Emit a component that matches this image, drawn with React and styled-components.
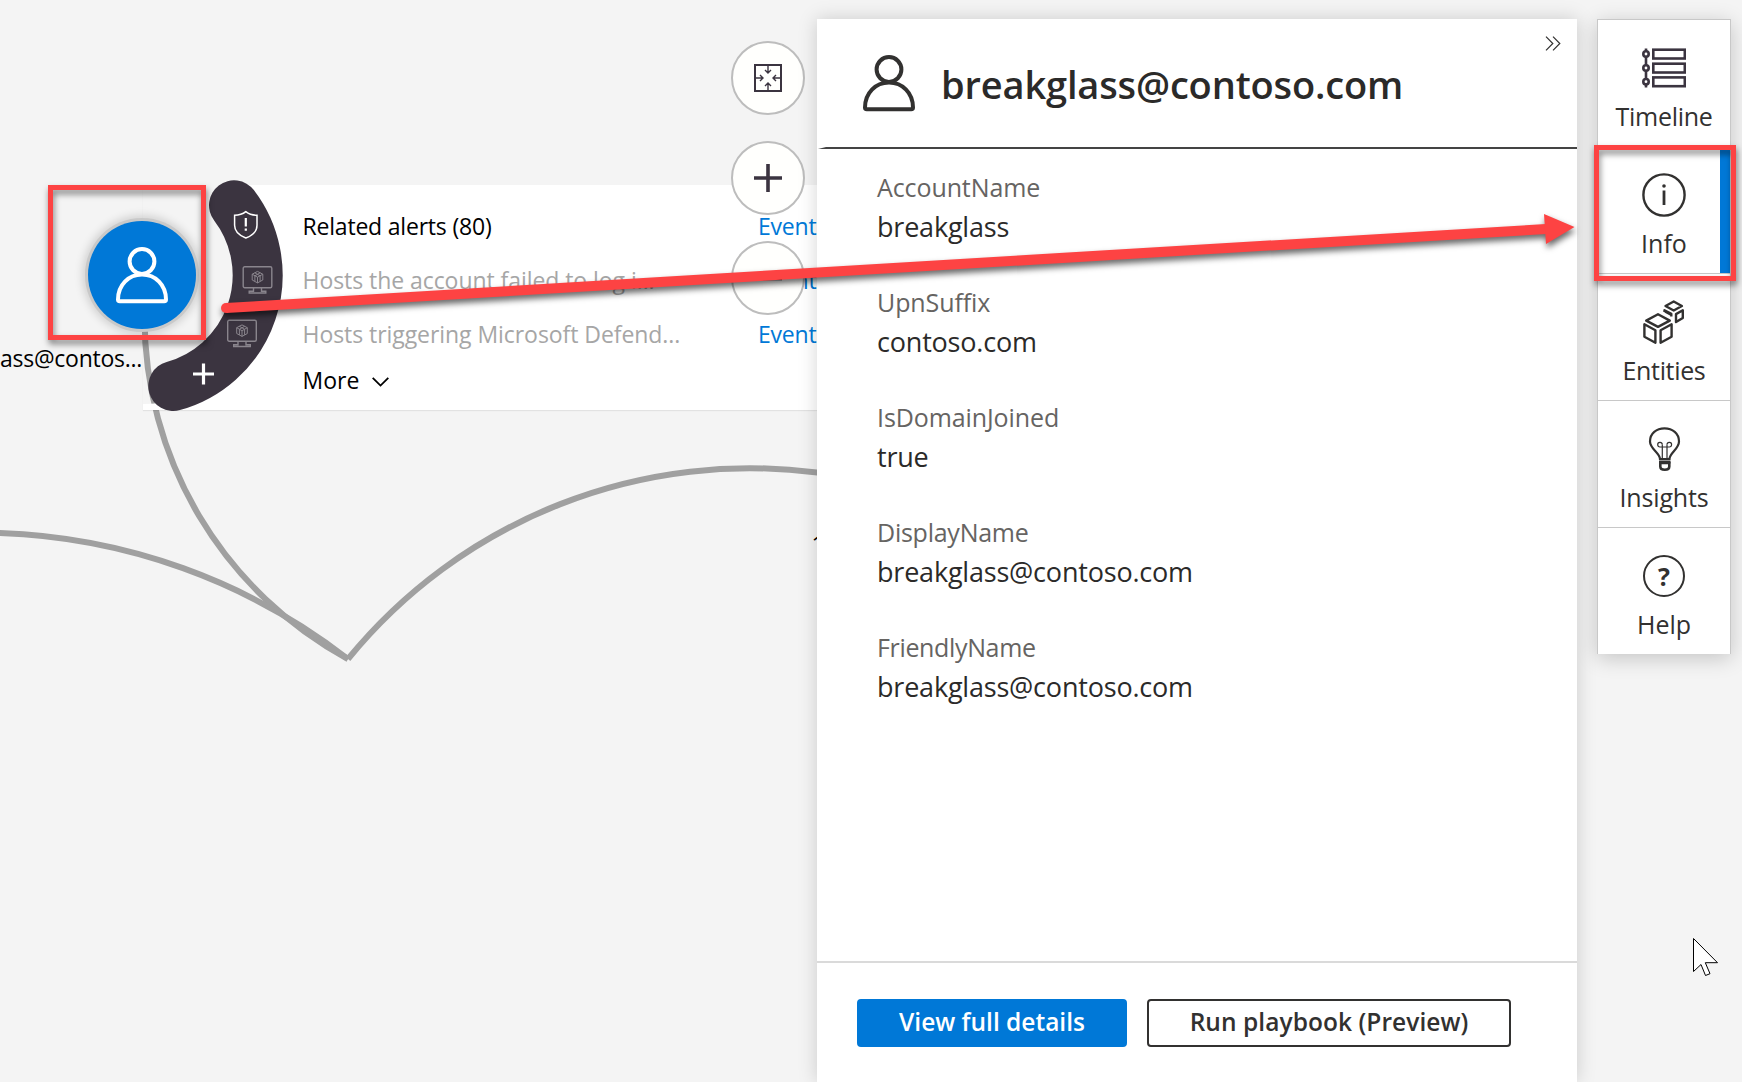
import React from "react";
import styled, { createGlobalStyle } from "styled-components";

const Global = createGlobalStyle`
  * { box-sizing: border-box; }
  html, body { margin: 0; height: 100%; }
  body {
    background: #f4f4f4;
    font-family: "Open Sans", "Noto Sans", sans-serif;
    color: #2b2a29;
    overflow: hidden;
  }
  svg { display: block; }
`;

const red = "#fd4343";
const ink = "#323130";
const plum = "#3b3440";

const Screen = styled.div`
  position: relative;
  display: flex;
  width: 1742px;
  height: 1082px;
  overflow: hidden;
  background: #f4f4f4;
`;

const Canvas = styled.main`
  position: relative;
  flex: 0 0 817px;
  height: 100%;
`;

const Edges = styled.svg`
  position: absolute;
  inset: 0;
  fill: none;
  stroke: #a0a0a0;
  stroke-width: 6;
`;

const NodeLabel = styled.div`
  position: absolute;
  left: 0;
  top: 342px;
  font-size: 23px;
  line-height: 32px;
  letter-spacing: -0.25px;
  white-space: nowrap;
  color: #000;
`;

const CountLabel = styled(NodeLabel)`
  left: 811.5px;
  top: 528px;
`;

const RelatedCard = styled.section`
  position: absolute;
  left: 143px;
  top: 185px;
  width: 674px;
  height: 225px;
  padding: 24px 0 0 159.5px;
  background: radial-gradient(circle at 0 90px, transparent 128.5px, #fff 129.5px);
  box-shadow: 0 1px 1px rgba(0, 0, 0, 0.07);
`;

const RelatedRow = styled.div`
  display: grid;
  grid-template-columns: 455.5px 1fr;
  height: 54px;
  font-size: 23px;
  line-height: 34px;
  letter-spacing: ${(p) => (p.$dim ? "-0.06px" : "-0.2px")};
  white-space: nowrap;
  overflow: hidden;
  color: ${(p) => (p.$dim ? "#a6a6a6" : "#000")};
`;

const EventLink = styled.a`
  color: #0078d7;
  letter-spacing: -0.2px;
`;

const MoreRow = styled.div`
  display: flex;
  align-items: center;
  gap: 13px;
  margin-top: -8px;
  font-size: 23px;
  line-height: 34px;
  color: #000;
  svg { margin-top: 4px; }
`;

const AccountNode = styled.div`
  position: absolute;
  left: 88px;
  top: 221px;
  width: 108px;
  height: 108px;
  border-radius: 50%;
  background: #0078d7;
  box-shadow: 0 0 0 3px #c9c9c9, 0 0 10px 5px rgba(0, 0, 0, 0.16);
  display: grid;
  place-items: center;
  color: #fff;
`;

const RadialMenu = styled.svg`
  position: absolute;
  left: 140px;
  top: 172px;
`;

const ZoomTools = styled.div`
  position: absolute;
  left: 731px;
  top: 41px;
  display: flex;
  flex-direction: column;
  gap: 26px;
`;

const ZoomButton = styled.div`
  width: 74px;
  height: 74px;
  border: 2px solid #bdbdbd;
  border-radius: 50%;
  background: #fffffd;
  display: grid;
  place-items: center;
`;

const Panel = styled.aside`
  position: relative;
  flex: 0 0 760px;
  margin-top: 19px;
  height: 1063px;
  display: flex;
  flex-direction: column;
  background: #fff;
  box-shadow: 0 0 18px rgba(0, 0, 0, 0.17);
`;

const PanelHeader = styled.header`
  display: flex;
  height: 128px;
  padding-left: 46px;
`;

const HeaderRule = styled.div`
  height: 2px;
  background: #444;
  clip-path: polygon(1px 100%, 9px 0, 100% 0, 100% 100%);
`;

const HeaderIcon = styled.div`
  margin-top: 36px;
  width: 52px;
  color: ${ink};
`;

const Title = styled.h1`
  flex: 1;
  margin: 35px 0 0 26px;
  font-size: 38px;
  font-weight: 600;
  line-height: 60px;
  letter-spacing: -0.15px;
  white-space: nowrap;
  color: #2b2a29;
`;

const Collapse = styled.div`
  margin: 16.5px 16px 0 0;
`;

const Fields = styled.dl`
  flex: 1;
  margin: 0;
  padding: 19px 0 0 60px;
`;

const Field = styled.div`
  height: 115px;
`;

const FieldName = styled.dt`
  font-size: 25px;
  line-height: 38px;
  letter-spacing: ${(p) => p.$spacing}px;
  color: #666462;
`;

const FieldValue = styled.dd`
  margin: 2px 0 0;
  font-size: 27px;
  line-height: 38px;
  letter-spacing: -0.2px;
  color: #2b2a29;
`;

const Footer = styled.footer`
  display: flex;
  gap: 20px;
  height: 121px;
  padding: 36px 0 0 40px;
  border-top: 2px solid #dadada;
`;

const Button = styled.button`
  width: ${(p) => p.$width}px;
  height: 48px;
  padding: 0 0 2px;
  border: 2px solid ${(p) => (p.$primary ? "#0078d7" : ink)};
  border-radius: 4px;
  background: ${(p) => (p.$primary ? "#0078d7" : "#fff")};
  color: ${(p) => (p.$primary ? "#fff" : ink)};
  font: 600 24.5px/40px "Open Sans", "Noto Sans", sans-serif;
  letter-spacing: ${(p) => p.$spacing}px;
  white-space: nowrap;
`;

const Rail = styled.nav`
  display: flex;
  flex-direction: column;
  margin: 19px 0 0 20px;
  width: 134px;
  height: 635px;
  border: 1px solid #c8c8c8;
  border-bottom: 0;
  background: #fff;
  box-shadow: 0 4px 20px rgba(0, 0, 0, 0.2);
`;

const RailItem = styled.div`
  display: flex;
  flex-direction: column;
  align-items: center;
  flex: 0 0 127px;
  padding-top: 26px;
  border-bottom: 1px solid #c8c8c8;
  box-shadow: ${(p) => (p.$active ? "inset -10px 0 0 #0078d7" : "none")};
  font-size: 25px;
  letter-spacing: ${(p) => p.$spacing}px;
  color: ${ink};
  &:last-child { border-bottom: 0; }
`;

const RailLabel = styled.span`
  margin-top: 8px;
  line-height: 36px;
`;

const Outline = styled.div`
  position: absolute;
  left: ${(p) => p.$x}px;
  top: ${(p) => p.$y}px;
  width: ${(p) => p.$w}px;
  height: ${(p) => p.$h}px;
  border: 5px solid ${red};
  filter: drop-shadow(1px 4px 3px rgba(0, 0, 0, 0.5));
`;

const Arrow = styled.svg`
  position: absolute;
  inset: 0;
  filter: drop-shadow(1px 4px 3px rgba(0, 0, 0, 0.6));
`;

const Cursor = styled.svg`
  position: absolute;
  left: 1690px;
  top: 935px;
`;

function UserIcon({ width = 52 }) {
  return (
    <svg width={width} height={57} viewBox="0 0 52 57" fill="none" stroke="currentColor" strokeWidth="4">
      <circle cx="26" cy="14.5" r="12.4" />
      <path d="M26 27.5C12.5 27.5 2 38 2 52.5q0 1.8 1.8 1.8h44.4q1.8 0 1.8-1.8C50 38 39.5 27.5 26 27.5Z" />
    </svg>
  );
}

function HostGlyph({ x, y }) {
  return (
    <g transform={`translate(${x} ${y})`} fill="none" stroke="#8a858d" strokeWidth="1.4">
      <rect x="0.7" y="0.7" width="28.6" height="21" rx="1.5" />
      <path d="M11 22v3.3H6.7V27h16.6v-1.7H19V22" />
      <path d="M15 5.4l5.3 2.8v5.8L15 16.9 9.7 14V8.2zM9.7 8.2l5.3 3 5.3-3M15 11.2v5.7M12.3 6.8l5.3 3v5.5M17.7 6.8l-5.3 3v5.5" strokeWidth="1" />
    </g>
  );
}

function TimelineIcon() {
  return (
    <svg width="44" height="44" viewBox="0 0 44 44" fill="none" stroke={plum} strokeWidth="2.6">
      <path d="M4 2.5v39" />
      {[8, 22, 35.7].map((y) => (
        <React.Fragment key={y}>
          <circle cx="4" cy={y} r="2.7" fill="#fff" strokeWidth="2.6" />
          <rect x="11.3" y={y - 4.3} width="31.5" height="8.8" />
        </React.Fragment>
      ))}
    </svg>
  );
}

function InfoIcon() {
  return (
    <svg width="44" height="44" viewBox="0 0 44 44" fill="none" stroke={ink} strokeWidth="2.4">
      <circle cx="22" cy="22" r="20.6" />
      <path d="M22 17.5V32" strokeWidth="2.8" />
      <circle cx="22" cy="13" r="1.8" fill={ink} stroke="none" />
    </svg>
  );
}

function EntitiesIcon() {
  return (
    <svg width="44" height="44" viewBox="0 0 44 44" fill="none" stroke={ink} strokeWidth="2.4" strokeLinejoin="round">
      <path d="M16 14.3 4.2 20.6 16 26.9l11.8-6.300z" />
      <path d="M2.400 24.2v12.5l11 6V30.200z" />
      <path d="M29.600 24.2v12.5l-11 6V30.200z" />
      <path d="M31.700 1.500 23.500 6l8.2 4.5L39.900 6z" />
      <path d="M40.800 10.300v7.600l-6.800 4.200v-8z" />
      <path d="M22.500 12V10.200l6.800 3.600v2.800M23 11.500l6 3.300" />
    </svg>
  );
}

function InsightsIcon() {
  return (
    <svg width="44" height="44" viewBox="0 0 44 44" fill="none" stroke={ink} strokeWidth="2.2">
      <path d="M18 32c0-6-10-10-10-17.5C8 6.5 14.5 1.3 22.5 1.3S37 6.5 37 14.5C37 22 27.5 26 27.5 32z" />
      <path d="M20.3 31V17.5M25 31V17.5" strokeWidth="1.2" />
      <path d="M20.3 20h-2.2a2.3 2.3 0 1 1 2.2-2.5M25 20h2.2a2.3 2.3 0 1 0-2.2-2.5M20.3 20H25" strokeWidth="1.2" />
      <path d="M18.3 36h9v3.5q0 3.2-4.5 3.2t-4.5-3.2z" strokeWidth="2.6" />
      <path d="M17 35h11.5" strokeWidth="3" />
    </svg>
  );
}

const HelpBadge = styled.div`
  width: 42px;
  height: 42px;
  margin: 1px 0;
  border: 2.4px solid ${ink};
  border-radius: 50%;
  font-size: 25px;
  font-weight: 700;
  line-height: 38px;
  text-align: center;
`;

const railItems = [
  { label: "Timeline", icon: <TimelineIcon />, spacing: -0.3 },
  { label: "Info", icon: <InfoIcon />, spacing: 0, active: true },
  { label: "Entities", icon: <EntitiesIcon />, spacing: -0.35 },
  { label: "Insights", icon: <InsightsIcon />, spacing: -0.15 },
  { label: "Help", icon: <HelpBadge>?</HelpBadge>, spacing: 0 },
];

const fields = [
  ["AccountName", "breakglass", -0.1],
  ["UpnSuffix", "contoso.com", -0.1],
  ["IsDomainJoined", "true", -0.1],
  ["DisplayName", "breakglass@contoso.com", -0.25],
  ["FriendlyName", "breakglass@contoso.com", -0.35],
];

const related = [
  { text: "Related alerts (80)" },
  { text: "Hosts the account failed to log i...", dim: true },
  { text: "Hosts triggering Microsoft Defend...", dim: true },
];

export default function App() {
  return (
    <Screen>
      <Global />
      <Canvas>
        <Edges width="817" height="1082">
          <path d="M144.5 317A389 389 0 0 0 348 659" />
          <path d="M-2 533A600 600 0 0 1 348 659" />
          <path d="M348 659A518.6 518.6 0 0 1 820 473" />
        </Edges>
        <NodeLabel>ass@contos...</NodeLabel>
        <CountLabel>1</CountLabel>
        <RelatedCard>
          {related.map((r) => (
            <RelatedRow key={r.text} $dim={r.dim}>
              <span>{r.text}</span>
              <EventLink>Event</EventLink>
            </RelatedRow>
          ))}
          <MoreRow>
            More
            <svg width="17" height="10" viewBox="0 0 17 10" fill="none" stroke="#000" strokeWidth="1.8">
              <path d="M.7.8 8.5 8.6 16.3.8" />
            </svg>
          </MoreRow>
        </RelatedCard>
        <AccountNode>
          <UserIcon />
        </AccountNode>
        <RadialMenu width="150" height="246" viewBox="140 172 150 246">
          <path d="M234 205.3A115 115 0 0 1 173.3 386" fill="none" stroke={plum} strokeWidth="50" strokeLinecap="round" />
          <g fill="none" stroke="#fff">
            <path d="M245.8 211.7q-4.5 3.6-11.2 3.6v10q0 8.5 11.2 12.7 11.2-4.2 11.2-12.7v-10q-6.7 0-11.2-3.6z" strokeWidth="1.5" />
            <path d="M245.8 218v8.5M245.8 228.5v2.3" strokeWidth="2.2" />
            <path d="M203.5 363.5v21M193 374h21" strokeWidth="3.2" />
          </g>
          <HostGlyph x={242.5} y={266} />
          <HostGlyph x={227} y={319.5} />
        </RadialMenu>
        <ZoomTools>
          <ZoomButton>
            <svg width="28" height="28" viewBox="0 0 28 28" fill="none" stroke={plum}>
              <rect x="1" y="1" width="26" height="26" strokeWidth="2" />
              <path d="M14 2v7M11 6l3 3 3-3M14 26v-7M11 22l3-3 3 3M2 14h7M6 11l3 3-3 3M26 14h-7M22 11l-3 3 3 3" strokeWidth="1.4" />
            </svg>
          </ZoomButton>
          <ZoomButton>
            <svg width="28" height="28" stroke={plum} strokeWidth="3.6">
              <path d="M14 0v28M0 14h28" />
            </svg>
          </ZoomButton>
          <ZoomButton>
            <svg width="28" height="28" stroke={plum} strokeWidth="3.6">
              <path d="M0 14.5h28" />
            </svg>
          </ZoomButton>
        </ZoomTools>
      </Canvas>

      <Panel>
        <PanelHeader>
          <HeaderIcon>
            <UserIcon />
          </HeaderIcon>
          <Title>breakglass@contoso.com</Title>
          <Collapse>
            <svg width="16" height="15" fill="none" stroke={ink} strokeWidth="1.2">
              <path d="M1 .7 7.8 7.5 1 14.3M8 .7l6.8 6.8L8 14.3" />
            </svg>
          </Collapse>
        </PanelHeader>
        <HeaderRule />
        <Fields>
          {fields.map(([name, value, spacing]) => (
            <Field key={name}>
              <FieldName $spacing={spacing}>{name}</FieldName>
              <FieldValue>{value}</FieldValue>
            </Field>
          ))}
        </Fields>
        <Footer>
          <Button $primary $width={270} $spacing={0}>View full details</Button>
          <Button $width={364} $spacing={0.06}>Run playbook (Preview)</Button>
        </Footer>
      </Panel>

      <Rail>
        {railItems.map((item) => (
          <RailItem key={item.label} $active={item.active} $spacing={item.spacing}>
            {item.icon}
            <RailLabel>{item.label}</RailLabel>
          </RailItem>
        ))}
      </Rail>

      <Outline $x={48} $y={185} $w={158} $h={155} />
      <Outline $x={1594} $y={145} $w={142} $h={136} />
      <Arrow width="1742" height="1082" fill={red}>
        <path d="M226 308 1546 229" stroke={red} strokeWidth="10" />
        <circle cx="226" cy="308" r="5" />
        <path d="M1544 214 1574.5 227 1546 244z" />
      </Arrow>
      <Cursor width="32" height="44" fill="#fff" stroke="#000" strokeWidth="1">
        <path d="M3.5 3.5v33l7.5-7 4.5 11 4.5-1.8-4.7-11h12.2z" />
      </Cursor>
    </Screen>
  );
}
